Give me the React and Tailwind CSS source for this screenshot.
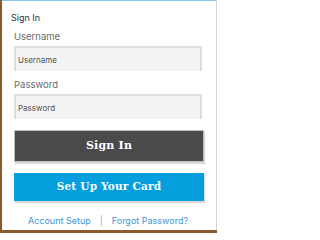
export default function App() {
  return (
    <div className="w-[217px] h-[233px] bg-[#8a5a2e] flex flex-col">
      <div className="h-[230px] ml-[2px] bg-white border-t border-t-[#86c8ec] border-r border-r-[#d8d8d8] font-['Inter',sans-serif] flex flex-col">
        <div className="pl-[9px] pt-[11px] text-[9px] leading-[12px] text-[#333]">Sign In</div>
        <div className="pl-[12px] pr-[12px] flex flex-col">
          <label className="mt-[6px] text-[9.5px] leading-[13px] text-[#6a6a6a]">Username</label>
          <div className="mt-[3px] mr-[2px] h-[25px] bg-[#f3f3f3] border-2 border-[#dedede] border-b-0 flex items-center pl-[2px] text-[8px] text-[#555]">Username</div>
          <label className="mt-[7px] text-[9.5px] leading-[13px] text-[#6a6a6a]">Password</label>
          <div className="mt-[3px] mr-[2px] h-[25px] bg-[#f3f3f3] border-2 border-[#dedede] border-b-0 flex items-center pl-[2px] text-[8px] text-[#555]">Password</div>
          <button className="mt-[11px] h-[32px] bg-[#4a4a4a] border border-[#bfbfbf] shadow-[1px_2px_1px_rgba(0,0,0,0.15)] text-white font-['DejaVu_Serif',serif] font-bold text-[11px] tracking-[0.2px]">Sign In</button>
          <button className="mt-[11px] h-[28px] bg-[#049fdc] shadow-[1px_2px_1px_rgba(0,0,0,0.15)] text-white font-['DejaVu_Serif',serif] font-bold text-[10.5px] tracking-[0.2px]">Set Up Your Card</button>
          <div className="mt-[13px] flex justify-center items-center gap-[9px] text-[9px] text-[#3b97d8] pr-[2px]">
            <span>Account Setup</span>
            <span className="text-[#8ab]">|</span>
            <span>Forgot Password?</span>
          </div>
        </div>
      </div>
    </div>
  );
}
